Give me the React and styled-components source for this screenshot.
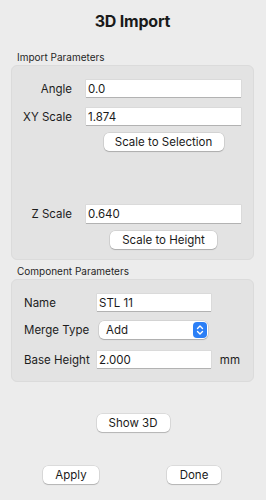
import React from "react";
import styled, { createGlobalStyle } from "styled-components";

const GlobalStyle = createGlobalStyle`
  html, body {
    margin: 0;
    padding: 0;
    background: #ececec;
  }
  body {
    font-family: Inter, "Liberation Sans", sans-serif;
    color: #1d1d1d;
  }
`;

const Window = styled.div`
  width: 266px;
  height: 500px;
  box-sizing: border-box;
  background: #ececec;
  display: flex;
  flex-direction: column;
  padding: 0 12px 0 11px;
`;

const Title = styled.h1`
  margin: 10px 0 0;
  height: 22px;
  line-height: 22px;
  font-size: 16px;
  font-weight: 700;
  text-align: center;
  letter-spacing: -0.2px;
  color: #1a1a1a;
`;

const SectionLabel = styled.div`
  font-size: 10px;
  line-height: 12px;
  margin: ${(p) => p.$top}px 0 2px 6px;
  color: #262626;
`;

const Group = styled.div`
  background: #e3e3e3;
  border: 1px solid #dbdbdb;
  border-radius: 6px;
  box-sizing: border-box;
  padding: ${(p) => p.$pad};
  display: grid;
  grid-template-columns: ${(p) => p.$cols};
  column-gap: ${(p) => p.$gap}px;
  align-items: center;
`;

const Label = styled.div`
  font-size: 11.5px;
  line-height: 14px;
  text-align: ${(p) => (p.$left ? "left" : "right")};
  margin-top: ${(p) => p.$mt || 0}px;
  white-space: nowrap;
`;

const Field = styled.input`
  box-sizing: border-box;
  height: ${(p) => p.$h || 17}px;
  width: 100%;
  border: none;
  outline: none;
  background: #fff;
  font-family: inherit;
  font-size: 11.5px;
  color: #1a1a1a;
  padding: 0 2px;
  margin-top: ${(p) => p.$mt || 0}px;
  box-shadow: 0 0 0 0.5px rgba(0, 0, 0, 0.08), 0 1px 0 rgba(0, 0, 0, 0.18);
`;

const Button = styled.button`
  box-sizing: border-box;
  height: 18px;
  width: ${(p) => p.$w}px;
  border: none;
  border-radius: 5px;
  background: #fff;
  font-family: inherit;
  font-size: 11.5px;
  color: #1a1a1a;
  padding: 0;
  line-height: 18px;
  box-shadow: 0 0 0 0.5px rgba(0, 0, 0, 0.14), 0 1px 1px rgba(0, 0, 0, 0.18);
`;

const ButtonCell = styled.div`
  grid-column: 2;
  display: flex;
  justify-content: center;
  margin-top: ${(p) => p.$mt || 0}px;
`;

const Popup = styled.div`
  box-sizing: border-box;
  height: 18px;
  margin: ${(p) => p.$mt || 0}px 3px 0 2px;
  background: #fff;
  border-radius: 5px;
  display: flex;
  align-items: center;
  justify-content: space-between;
  padding: 0 1px 0 7px;
  font-size: 11.5px;
  box-shadow: 0 0 0 0.5px rgba(0, 0, 0, 0.14), 0 1px 1px rgba(0, 0, 0, 0.18);
`;

const Stepper = styled.div`
  width: 14px;
  height: 16px;
  border-radius: 4px;
  background: #2b7ff6;
  display: flex;
  align-items: center;
  justify-content: center;
`;

const Unit = styled.div`
  font-size: 11.5px;
  justify-self: end;
  margin-top: ${(p) => p.$mt || 0}px;
`;

const Spacer = styled.span``;

const Footer = styled.div`
  display: flex;
  justify-content: ${(p) => p.$justify};
  margin-top: ${(p) => p.$mt}px;
  padding: ${(p) => p.$pad || 0};
`;

export default function App() {
  return (
    <>
      <GlobalStyle />
      <Window>
        <Title>3D Import</Title>
        <SectionLabel $top={19}>Import Parameters</SectionLabel>
        <Group $pad="14px 13px 10px 0" $cols="60px 155px" $gap={14}>
          <Label>Angle</Label>
          <Field defaultValue="0.0" />
          <Label $mt={11}>XY Scale</Label>
          <Field defaultValue="1.874" $mt={11} />
          <ButtonCell $mt={8}>
            <Button $w={120}>Scale to Selection</Button>
          </ButtonCell>
          <Label $mt={54}>Z Scale</Label>
          <Field defaultValue="0.640" $h={18} $mt={54} />
          <ButtonCell $mt={8}>
            <Button $w={107}>Scale to Height</Button>
          </ButtonCell>
        </Group>
        <SectionLabel $top={5}>Component Parameters</SectionLabel>
        <Group $pad="14px 0 13px 12px" $cols="73px 114px 29px" $gap={0}>
          <Label $left>Name</Label>
          <Field defaultValue="STL 11" />
          <Spacer />
          <Label $left $mt={10}>Merge Type</Label>
          <Popup $mt={10}>
            <span>Add</span>
            <Stepper>
              <svg width="8" height="12" viewBox="0 0 8 12" fill="none">
                <path
                  d="M1.5 4.5 L4 2 L6.5 4.5 M1.5 7.5 L4 10 L6.5 7.5"
                  stroke="#fff"
                  strokeWidth="1.4"
                  strokeLinecap="round"
                  strokeLinejoin="round"
                />
              </svg>
            </Stepper>
          </Popup>
          <Spacer />
          <Label $left $mt={12}>Base Height</Label>
          <Field defaultValue="2.000" $mt={12} />
          <Unit $mt={12}>mm</Unit>
        </Group>
        <Footer $justify="center" $mt={32} $pad="0 0 0 1px">
          <Button $w={73}>Show 3D</Button>
        </Footer>
        <Footer $justify="space-between" $mt={34} $pad="0 33px 0 32px">
          <Button $w={56}>Apply</Button>
          <Button $w={54}>Done</Button>
        </Footer>
      </Window>
    </>
  );
}
